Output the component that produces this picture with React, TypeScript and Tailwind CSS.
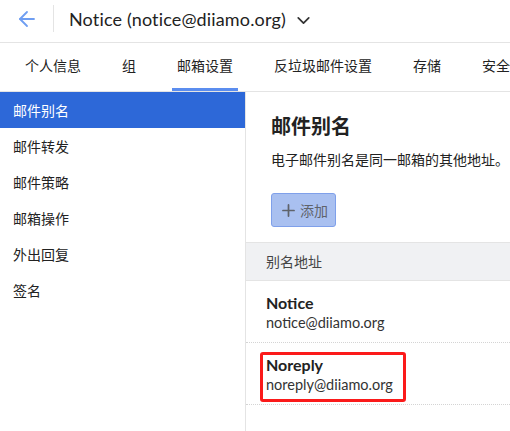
import { ArrowLeft, ChevronDown, Plus } from "lucide-react";

const tabs = ["个人信息", "组", "邮箱设置", "反垃圾邮件设置", "存储", "安全"];
const menu = ["邮件别名", "邮件转发", "邮件策略", "邮箱操作", "外出回复", "签名"];

const aliases = [
  { name: "Notice", email: "notice@diiamo.org", marked: false },
  { name: "Noreply", email: "noreply@diiamo.org", marked: true },
];

export default function App() {
  return (
    <div
      className="w-[510px] h-[431px] overflow-hidden bg-white text-[#222]"
      style={{ fontFamily: 'Lato, "Noto Sans CJK SC", sans-serif' }}
    >
      {/* header */}
      <div className="h-[43px] flex items-center border-b border-[#e4e4e4]">
        <div className="w-[53px] flex justify-center pb-[4px]">
          <ArrowLeft size={24} strokeWidth={1.8} className="text-[#6f9ef2]" />
        </div>
        <div className="h-[27px] border-l border-[#e4e4e4] self-start mt-[5px]" />
        <div className="pl-[15px] flex items-center gap-[7px] pb-[3px]">
          <span className="text-[18px] tracking-[0.15px]">Notice (notice@diiamo.org)</span>
          <ChevronDown size={21} strokeWidth={2} className="mt-[2px] text-[#333]" />
        </div>
      </div>

      {/* tabs */}
      <div className="h-[49px] flex border-b border-[#e4e4e4] pl-[20px] whitespace-nowrap">
        {tabs.map((t) => (
          <div
            key={t}
            className="relative px-[5px] mr-[31px] flex items-center text-[14px] text-[#222] pb-[4px]"
          >
            {t}
            {t === "邮箱设置" && (
              <div className="absolute left-0 right-0 bottom-0 h-[3px] bg-[#5b8def]" />
            )}
          </div>
        ))}
      </div>

      <div className="flex h-[339px]">
        {/* sidebar */}
        <div className="w-[246px] shrink-0 border-r border-[#e4e4e4]">
          {menu.map((m, i) => (
            <div
              key={m}
              className={`h-[36px] pl-[13px] flex items-center text-[14px] ${
                i === 0 ? "bg-[#2d68d8] text-white" : "text-[#222]"
              }`}
            >
              {m}
            </div>
          ))}
        </div>

        {/* main */}
        <div className="flex-1 min-w-0">
          <div className="pl-[25px] pt-[20px] pb-[15px] whitespace-nowrap">
            <h1 className="text-[20px] font-bold leading-[28px]">邮件别名</h1>
            <p className="mt-[10px] text-[14px] leading-[20px]">电子邮件别名是同一邮箱的其他地址。</p>
            <button className="mt-[23px] h-[34px] px-[7px] flex items-center gap-[2px] rounded-[3px] border border-[#7fa0ea] bg-[#a9c0f0] text-[#5f636b] text-[14px]">
              <Plus size={19} strokeWidth={2.2} />
              <span>添加</span>
            </button>
          </div>

          <div className="h-[39px] border-t border-b border-[#e4e4e4] bg-[#f0f1f3] pl-[20px] flex items-center text-[14px] text-[#444]">
            别名地址
          </div>

          {aliases.map((a) => (
            <div key={a.name} className="relative h-[62px] border-b border-dotted border-[#d4d4d4] pl-[20px] pt-[12px]">
              <div className="text-[16px] font-bold leading-[20px]">{a.name}</div>
              <div className="text-[14.5px] leading-[19px] text-[#333]">{a.email}</div>
              {a.marked && (
                <div className="absolute left-[14px] top-[9px] w-[146px] h-[50px] border-[3px] border-[#fb1a1a] rounded-[3px]" />
              )}
            </div>
          ))}
        </div>
      </div>
    </div>
  );
}
